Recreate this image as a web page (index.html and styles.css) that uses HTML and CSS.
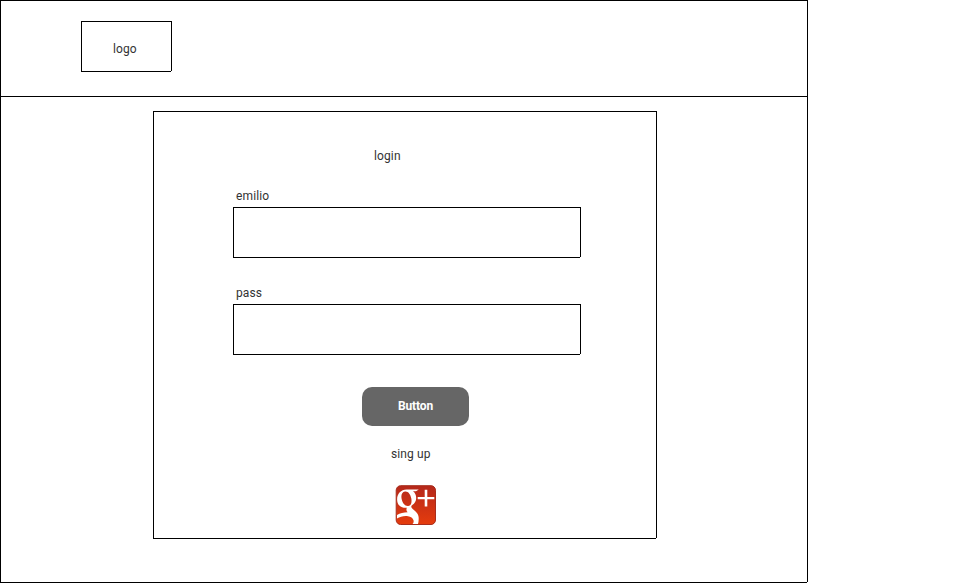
FILE: index.html
```html
<!DOCTYPE html>
<html lang="en">
<head>
<meta charset="utf-8">
<title>login</title>
<link rel="stylesheet" href="styles.css">
</head>
<body>
<div class="page frame">
  <header class="header">
    <div class="logo frame"><span>logo</span></div>
  </header>
  <main class="login frame">
    <h1 class="title">login</h1>
    <label class="label" for="email">emilio</label>
    <div class="field frame"><input id="email" type="text"></div>
    <label class="label" for="pass">pass</label>
    <div class="field frame"><input id="pass" type="password"></div>
    <button class="button" type="button">Button</button>
    <a class="signup">sing up</a>
    <svg class="gplus" width="42" height="42" viewBox="0 0 42 42" aria-hidden="true">
      <defs>
        <linearGradient id="red" x1="0" y1="0" x2="0" y2="1">
          <stop offset="0" stop-color="#b5281b"/>
          <stop offset="1" stop-color="#e53c0d"/>
        </linearGradient>
      </defs>
      <rect x="1.2" y="1.7" width="39.3" height="38.8" rx="4.5" fill="url(#red)" stroke="#a82d1c" stroke-width="1"/>
      <path fill="#fff" fill-rule="evenodd" d="M11.500 5.500H23.800L21 7.300H18C20.200 9 21.200 11.200 21.200 14C21.200 17.200 19.700 19.300 17.300 21.100C15.700 22.300 16 23.400 17.700 24.900C21 27.700 23.700 29.800 23.700 34C23.700 36.500 23.500 38.500 23 40H17.500C18.500 39 18.900 37.800 18.500 36.300C17.800 33.800 15.800 32.500 13 32.200C9 31.700 5.200 32.500 2 34.600V31C5 29.300 8.700 28.600 12.600 28.300C11.300 26.800 11.100 25.400 11.800 23.800C5.800 24.300 2.100 20.800 2.100 15.400C2.100 9.800 6 5.500 11.500 5.500ZM10 7.500C6.900 7.900 5.900 11 6.600 14.800C7.500 19.300 10.200 22.500 13.300 22C16.200 21.600 17 18.200 16.300 14.500C15.300 9.900 13.100 7.100 10 7.500Z"/>
      <path fill="#fff" d="M29.700 5.700H32.300V13H39.300V15.300H32.300V22.500H29.700V15.300H22.700V13H29.700Z"/>
    </svg>
  </main>
</div>
</body>
</html>
```
FILE: styles.css
```css
* {
  box-sizing: border-box;
}

body {
  margin: 0;
  background: #fff;
  color: #333;
  font: 12px/16px Roboto, Arial, sans-serif;
  letter-spacing: 0.12px;
}

.frame {
  position: relative;
  border: 1px solid #000;
}

/* the outlines leave their bottom right corner open */
.frame::after {
  content: "";
  position: absolute;
  right: -1px;
  bottom: -1px;
  width: 1px;
  height: 1px;
  background: #fff;
}

.page {
  width: 808px;
  height: 583px;
}

.header {
  height: 96px;
  padding: 20px 0 0 80px;
  border-bottom: 1px solid #000;
}

.logo {
  display: flex;
  align-items: center;
  width: 91px;
  height: 51px;
  padding: 4px 0 0 31px;
}

.login {
  display: flex;
  flex-direction: column;
  align-items: flex-start;
  width: 504px;
  height: 428px;
  margin: 14px 0 0 152px;
  padding: 36px 0 0 79px;
}

.title {
  margin: 0 0 24px 141px;
  font-size: 12px;
  font-weight: 400;
  line-height: 16px;
}

.label {
  margin: 0 0 3px 3px;
}

.field {
  width: 348px;
  height: 51px;
  margin-bottom: 27px;
}

.field input {
  display: block;
  width: 100%;
  height: 100%;
  padding: 0 8px;
  border: 0;
  outline: 0;
  background: none;
}

.button {
  width: 107px;
  height: 39px;
  margin: 5px 0 20px 129px;
  padding: 0 0 2px;
  border: 0;
  border-radius: 10px;
  background: #666;
  color: #fff;
  font: 700 12px/16px Roboto, Arial, sans-serif;
  letter-spacing: -0.15px;
}

.signup {
  margin-left: 158px;
}

.gplus {
  margin: 22px 0 0 162px;
}
```
